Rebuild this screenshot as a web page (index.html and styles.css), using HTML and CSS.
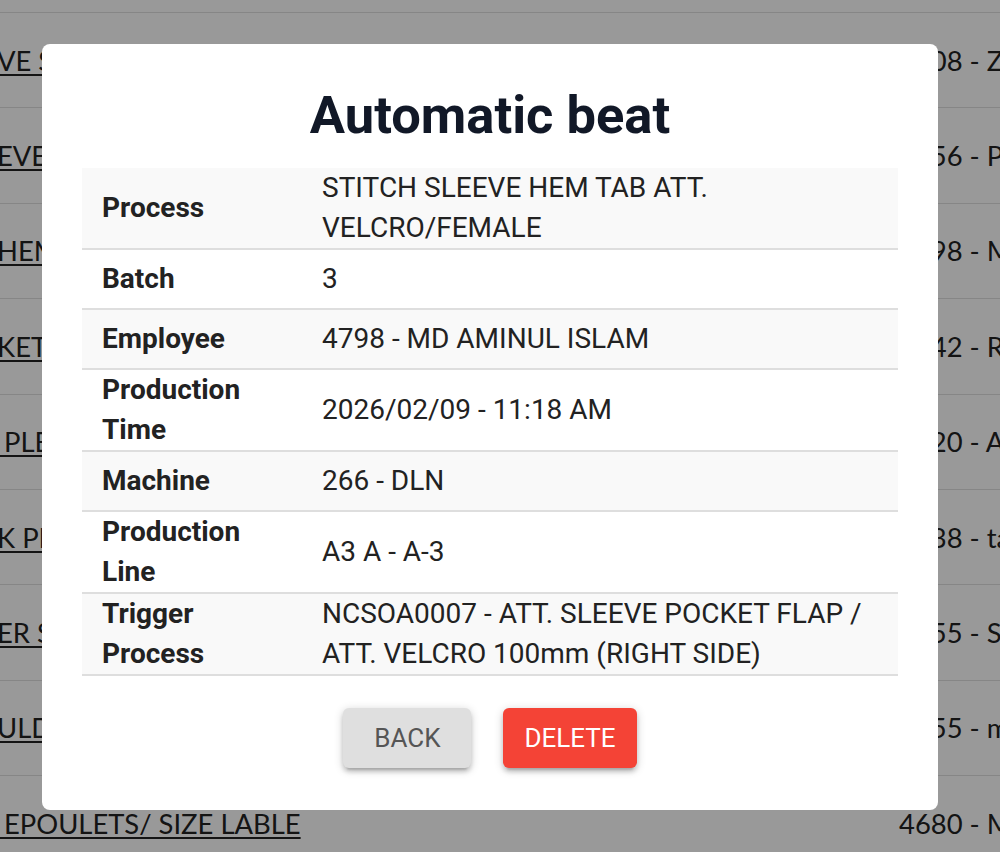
FILE: index.html
```html
<!DOCTYPE html>
<html lang="en">
<head>
<meta charset="utf-8">
<title>Automatic beat</title>
<link rel="stylesheet" href="styles.css">
</head>
<body>
<div class="page">
  <div class="bg-row bg-spacer"></div>
  <div class="bg-row"><div class="bg-left"><a class="bg-link">VE SEAM ATTACH</a></div><div class="bg-right">4608 - ZAHID</div></div>
  <div class="bg-row"><div class="bg-left"><a class="bg-link">EVE PLACKET</a></div><div class="bg-right">4556 - PARVEZ</div></div>
  <div class="bg-row"><div class="bg-left"><a class="bg-link">HEM BOTTOM</a></div><div class="bg-right">4698 - MASUD</div></div>
  <div class="bg-row"><div class="bg-left"><a class="bg-link">KET FLAP</a></div><div class="bg-right">4742 - RAHIM</div></div>
  <div class="bg-row"><div class="bg-left"><a class="bg-link">&nbsp;PLEAT</a></div><div class="bg-right">4620 - AKTER</div></div>
  <div class="bg-row"><div class="bg-left"><a class="bg-link">K PLACKET</a></div><div class="bg-right">4638 - taslima</div></div>
  <div class="bg-row"><div class="bg-left"><a class="bg-link">ER SEAM</a></div><div class="bg-right">4655 - SHIRIN</div></div>
  <div class="bg-row"><div class="bg-left"><a class="bg-link">ULDER TAB</a></div><div class="bg-right">4755 - mitu</div></div>
  <div class="bg-row"><div class="bg-left"><a class="bg-link">&nbsp;EPOULETS/ SIZE LABLE</a></div><div class="bg-right">4680 - MONI</div></div>
</div>

<div class="overlay">
  <div class="modal">
    <h1 class="modal-title">Automatic beat</h1>
    <table class="details">
      <tbody>
        <tr class="striped"><th>Process</th><td>STITCH SLEEVE HEM TAB ATT. VELCRO/FEMALE</td></tr>
        <tr><th>Batch</th><td>3</td></tr>
        <tr class="striped"><th>Employee</th><td>4798 - MD AMINUL ISLAM</td></tr>
        <tr><th>Production Time</th><td>2026/02/09 - 11:18 AM</td></tr>
        <tr class="striped"><th>Machine</th><td>266 - DLN</td></tr>
        <tr><th>Production Line</th><td>A3 A - A-3</td></tr>
        <tr class="striped"><th>Trigger Process</th><td>NCSOA0007 - ATT. SLEEVE POCKET FLAP / ATT. VELCRO 100mm (RIGHT SIDE)</td></tr>
      </tbody>
    </table>
    <div class="actions">
      <button class="btn btn-back">BACK</button>
      <button class="btn btn-delete">DELETE</button>
    </div>
  </div>
</div>
</body>
</html>
```
FILE: styles.css
```css
* { box-sizing: border-box; }

html, body {
  margin: 0;
  padding: 0;
  height: 100%;
  overflow: hidden;
}

body {
  background: #ffffff;
  font-family: Roboto, "Liberation Sans", Arial, sans-serif;
}

/* background page */
.page {
  width: 100%;
}

.bg-row {
  display: flex;
  align-items: center;
  height: 95.4px;
  border-bottom: 1px solid #e0e0e0;
  font-family: Lato, "Liberation Sans", sans-serif;
  font-size: 27.4px;
  color: #222222;
  white-space: nowrap;
}

.bg-spacer {
  height: 13px;
}

.bg-left {
  flex: 0 0 899px;
  overflow: hidden;
  text-indent: -3px;
}

.bg-link {
  color: #222222;
  text-decoration: underline;
  text-decoration-thickness: 2px;
  text-underline-offset: 3px;
}

.bg-right {
  flex: 0 0 auto;
}

/* overlay + modal */
.overlay {
  position: fixed;
  inset: 0;
  background: rgba(0, 0, 0, 0.4);
  padding: 44px 0 0 42px;
}

.modal {
  width: 896px;
  background: #ffffff;
  border-radius: 8px;
  padding: 40px 40px 42px;
}

.modal-title {
  margin: 0 0 22px;
  text-align: center;
  font-family: Roboto, "Liberation Sans", sans-serif;
  font-weight: 700;
  font-size: 52.5px;
  line-height: 62px;
  color: #111827;
}

.details {
  width: 100%;
  border-collapse: separate;
  border-spacing: 0;
  font-size: 28px;
  line-height: 40px;
  color: #222222;
}

.details th,
.details td {
  height: 60px;
  padding: 0 20px;
  border-bottom: 2px solid #dedede;
  vertical-align: middle;
  text-align: left;
}

.details th {
  width: 220px;
  font-weight: 700;
}

.details td {
  font-weight: 400;
}

.details .striped th,
.details .striped td {
  background: #f9f9f9;
}

.actions {
  display: flex;
  justify-content: center;
  gap: 32px;
  margin-top: 32px;
}

.btn {
  min-width: 128px;
  height: 60px;
  padding: 0 21px;
  border: none;
  border-radius: 6px;
  font-family: Roboto, "Liberation Sans", sans-serif;
  font-size: 26px;
  font-weight: 400;
  cursor: pointer;
  box-shadow: 0 4px 4px rgba(0, 0, 0, 0.14), 0 6px 2px -4px rgba(0, 0, 0, 0.12), 0 2px 10px rgba(0, 0, 0, 0.2);
}

.btn-back {
  background: #dfdfdf;
  color: #555555;
}

.btn-delete {
  background: #f44336;
  color: #ffffff;
}
```
